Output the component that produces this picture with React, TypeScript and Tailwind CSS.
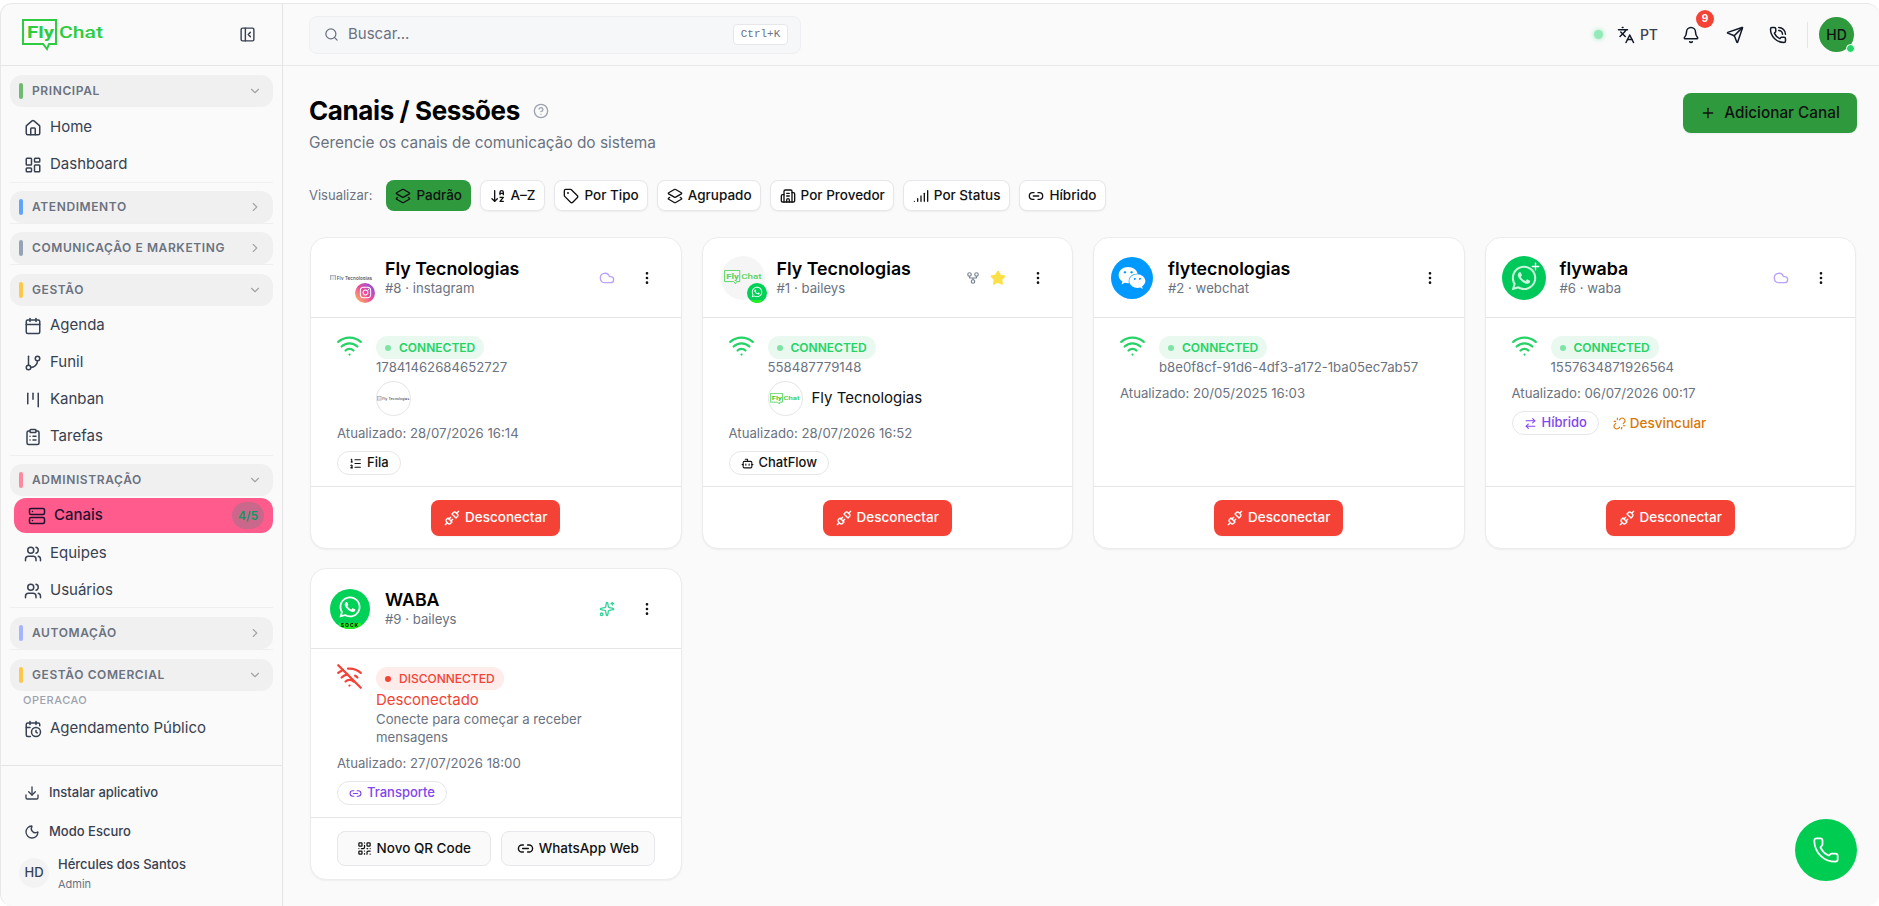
import type { ReactNode } from "react";
import {
  ArrowDownAZ,
  ArrowRightLeft,
  Bell,
  Bot,
  Building2,
  Calendar,
  CalendarClock,
  ChevronDown,
  ChevronRight,
  CircleHelp,
  ClipboardList,
  Cloud,
  Download,
  EllipsisVertical,
  GitBranch,
  GitFork,
  House,
  Kanban,
  Languages,
  Layers2,
  LayoutDashboard,
  Link2,
  ListOrdered,
  Moon,
  PanelLeftClose,
  Phone,
  PhoneCall,
  Plus,
  QrCode,
  Search,
  Send,
  Server,
  Signal,
  Sparkles,
  Star,
  Tag,
  Unlink,
  Unplug,
  Users,
  Wifi,
  WifiOff,
} from "lucide-react";
import { FaInstagram, FaWeixin, FaWhatsapp } from "react-icons/fa";

function Logo({ className }: { className: string }) {
  return (
    <svg viewBox="0 0 82 32" className={className} fill="none">
      <path d="M1 1h33v24H27l-2 5-4-5H1z" stroke="#2ecc40" strokeWidth="2" />
      <text x="5" y="19" fontFamily="Roboto, sans-serif" fontWeight="700" fontSize="16" fill="#2ecc40" textLength="27" lengthAdjust="spacingAndGlyphs">
        Fly
      </text>
      <text x="37" y="19" fontFamily="Roboto, sans-serif" fontWeight="500" fontSize="16" fill="#2ecc40" textLength="44" lengthAdjust="spacingAndGlyphs">
        Chat
      </text>
    </svg>
  );
}

function BrokenLogo({ className }: { className: string }) {
  return (
    <svg viewBox="0 0 44 6" className={className}>
      <rect x="0.5" y="0.5" width="5" height="5" fill="#e5e7eb" stroke="#9ca3af" strokeWidth="0.8" />
      <text x="7" y="4.8" fontFamily="Inter, sans-serif" fontSize="4.6" fontWeight="500" fill="#374151" textLength="36">
        Fly Tecnologias
      </text>
    </svg>
  );
}

function SideItem({ icon, label }: { icon: ReactNode; label: string }) {
  return (
    <div className="flex h-[37px] items-center gap-[8px] pl-[14px] text-[15px] text-[#374151]">
      {icon}
      <span>{label}</span>
    </div>
  );
}

function SideGroup({
  color,
  label,
  open,
  last,
  top,
  children,
}: {
  color: string;
  label: string;
  open?: boolean;
  last?: boolean;
  top: string;
  children?: ReactNode;
}) {
  return (
    <div className={last ? top : `border-b border-[#efefef] ${top}`}>
      <div className="flex h-[32px] items-center rounded-xl bg-[#f0f0f0] pl-[9px] pr-[11px]">
        <span className={`h-[16px] w-[4px] rounded-full ${color}`} />
        <span className="ml-[9px] flex-1 text-[12px] font-semibold tracking-[0.6px] text-[#6b7280]">{label}</span>
        {open ? (
          <ChevronDown className="size-[14px] text-[#a3a3a3]" />
        ) : (
          <ChevronRight className="size-[14px] text-[#a3a3a3]" />
        )}
      </div>
      {children}
    </div>
  );
}

function Sidebar() {
  const ic = "size-[18px] shrink-0 text-[#374151]";
  return (
    <aside className="flex w-[282px] shrink-0 flex-col border-r border-[#e5e5e5]">
      <div className="flex h-[62px] shrink-0 items-center justify-between border-b border-[#e5e5e5] pl-[21px] pr-[26px]">
        <Logo className="h-[32px] w-[82px]" />
        <PanelLeftClose className="size-[17px] text-[#374151]" />
      </div>
      <nav className="flex-1 px-[9px]">
        <SideGroup top="pt-[9px]" color="bg-[#6fba72]" label="PRINCIPAL" open>
          <div className="-mb-[1px] pt-[2px]">
            <SideItem icon={<House className={ic} />} label="Home" />
            <SideItem icon={<LayoutDashboard className={ic} />} label="Dashboard" />
          </div>
        </SideGroup>
        <SideGroup top="pt-[8px]" color="bg-[#60a5fa]" label="ATENDIMENTO" />
        <SideGroup top="pt-[8px]" color="bg-[#94a3b8]" label="COMUNICAÇÃO E MARKETING" />
        <SideGroup top="pt-[9px]" color="bg-[#fcc84a]" label="GESTÃO" open>
          <div className="pt-[1px]">
            <SideItem icon={<Calendar className={ic} />} label="Agenda" />
            <SideItem icon={<GitBranch className={ic} />} label="Funil" />
            <SideItem icon={<Kanban className={ic} />} label="Kanban" />
            <SideItem icon={<ClipboardList className={ic} />} label="Tarefas" />
          </div>
        </SideGroup>
        <SideGroup top="pt-[8px]" color="bg-[#fb8a9c]" label="ADMINISTRAÇÃO" open>
          <div className="ml-[4px] mt-[2px] flex h-[35px] items-center rounded-xl bg-[#ff5c8d] pl-[14px] pr-[9px]">
            <Server className="size-[18px] text-[#1f1130]" />
            <span className="ml-[8px] flex-1 text-[15px] font-medium text-[#1f1130]">Canais</span>
            <span className="flex h-[27px] w-[32px] items-center justify-center rounded-full bg-[#c9688a] text-[12px] font-semibold text-[#0d9b63]">
              4/5
            </span>
          </div>
          <div className="-mb-[2px] pt-[2px]">
            <SideItem icon={<Users className={ic} />} label="Equipes" />
            <SideItem icon={<Users className={ic} />} label="Usuários" />
          </div>
        </SideGroup>
        <SideGroup top="pt-[9px]" color="bg-[#a5b4fc]" label="AUTOMAÇÃO" />
        <SideGroup top="pt-[9px]" color="bg-[#fcc84a]" label="GESTÃO COMERCIAL" open last>
          <div className="pl-[13px] pt-[2px] text-[11px] font-medium leading-[14px] tracking-[0.5px] text-[#9ca3af]">OPERACAO</div>
          <div className="pt-[3px]">
            <SideItem icon={<CalendarClock className={ic} />} label="Agendamento Público" />
          </div>
        </SideGroup>
      </nav>
      <div className="shrink-0 border-t border-[#e5e5e5] pb-[11px] pt-[8px] text-[13px] font-medium text-[#374151]">
        <div className="flex h-[38px] items-center gap-[9px] pl-[23px]">
          <Download className="size-[16px]" />
          Instalar aplicativo
        </div>
        <div className="flex h-[39px] items-center gap-[9px] pl-[23px]">
          <Moon className="size-[16px]" />
          Modo Escuro
        </div>
        <div className="flex h-[44px] items-center gap-[9px] pl-[18px]">
          <span className="flex size-[30px] items-center justify-center rounded-full bg-[#f3f3f3] text-[13px]">HD</span>
          <div>
            <div className="leading-[18px]">Hércules dos Santos</div>
            <div className="mt-[4px] text-[11px] font-normal leading-[14px] text-[#6b7280]">Admin</div>
          </div>
        </div>
      </div>
    </aside>
  );
}

function TopBar() {
  return (
    <header className="flex h-[62px] shrink-0 items-center justify-between border-b border-[#e9e9e9] pl-[26px] pr-[25px]">
      <div className="flex h-[38px] w-[492px] items-center rounded-lg border border-[#eeeff2] bg-[#f6f7f9] pl-[14px] pr-[12px]">
        <Search className="size-[15px] text-[#6b7280]" />
        <span className="ml-[9px] flex-1 text-[15px] text-[#6b7280]">Buscar...</span>
        <span className="flex h-[21px] w-[55px] items-center justify-center rounded border border-[#e5e7eb] bg-white font-['Liberation_Mono',monospace] text-[11px] text-[#6b7280]">
          Ctrl+K
        </span>
      </div>
      <div className="flex items-center text-[#111827]">
        <span className="size-[9px] rounded-full bg-[#93eab8] shadow-[0_0_5px_#93eab8]" />
        <Languages className="ml-[14px] size-[18px]" />
        <span className="ml-[5px] text-[14px] font-medium text-[#374151]">PT</span>
        <span className="relative ml-[24px] flex">
          <Bell className="size-[18px]" />
          <span className="absolute left-[14px] -top-[16px] flex size-[18px] items-center justify-center rounded-full bg-[#f44336] text-[10px] font-bold text-white">
            9
          </span>
        </span>
        <Send className="ml-[26px] size-[18px]" />
        <PhoneCall className="ml-[25px] size-[18px]" />
        <span className="ml-[20px] h-[26px] w-px bg-[#e5e5e5]" />
        <span className="relative ml-[11px] flex size-[35px] items-center justify-center rounded-full bg-[#2e993d] text-[14px] font-medium text-[#111]">
          HD
          <span className="absolute -bottom-[1px] -right-[1px] size-[9px] rounded-full border border-white bg-[#25d366]" />
        </span>
      </div>
    </header>
  );
}

function FilterButton({ icon, label, active }: { icon: ReactNode; label: string; active?: boolean }) {
  return (
    <div
      className={
        active
          ? "flex h-[31px] items-center gap-[5px] rounded-lg bg-[#2e993d] px-[9px] text-[13.5px] font-medium text-[#111]"
          : "flex h-[31px] items-center gap-[5px] rounded-lg border border-[#e5e7eb] bg-white px-[8.5px] text-[13.5px] font-medium text-[#111] shadow-xs"
      }
    >
      {icon}
      {label}
    </div>
  );
}

function StatusBadge({ off }: { off?: boolean }) {
  return off ? (
    <span className="flex h-[23px] w-fit items-center gap-[8px] rounded-full bg-[#fdecea] px-[9px] text-[12px] font-medium text-[#f44336]">
      <span className="size-[6px] rounded-full bg-[#f44336]" />
      DISCONNECTED
    </span>
  ) : (
    <span className="flex h-[23px] w-fit items-center gap-[8px] rounded-full bg-[#e9f9ef] px-[9px] text-[12px] font-semibold text-[#25d366]">
      <span className="size-[6px] rounded-full bg-[#7fe3a4]" />
      CONNECTED
    </span>
  );
}

function Chip({ icon, label, purple }: { icon: ReactNode; label: string; purple?: boolean }) {
  return (
    <span
      className={
        purple
          ? "flex h-[24px] w-fit items-center gap-[5px] rounded-full border border-[#e5e7eb] px-[11px] text-[13px] font-medium text-[#8244f0]"
          : "flex h-[24px] w-fit items-center gap-[5px] rounded-full border border-[#e5e7eb] px-[11px] text-[13px] font-medium text-[#111]"
      }
    >
      {icon}
      {label}
    </span>
  );
}

function DisconnectFooter() {
  return (
    <button className="flex h-[36px] w-[129px] items-center justify-center gap-[5px] rounded-lg bg-[#f44336] text-[13.5px] font-medium text-white shadow-xs">
      <Unplug className="size-[16px]" />
      Desconectar
    </button>
  );
}

function ChannelCard({
  avatar,
  name,
  sub,
  actions,
  off,
  line,
  children,
  footer,
}: {
  avatar: ReactNode;
  name: string;
  sub: string;
  actions?: ReactNode;
  off?: boolean;
  line: ReactNode;
  children: ReactNode;
  footer?: ReactNode;
}) {
  return (
    <div className="flex h-[312px] flex-col rounded-2xl border border-[#ececec] bg-white shadow-xs">
      <div className="flex h-[80px] shrink-0 items-center border-b border-[#e5e5e5] pl-[18px] pr-[26px]">
        <div className="relative flex size-[44px] shrink-0 items-center justify-center">{avatar}</div>
        <div className="ml-[12px] flex-1 pb-[3px]">
          <div className="text-[17.8px] font-semibold leading-[23px] text-black">{name}</div>
          <div className="text-[13.2px] leading-[16px] text-[#6b7280]">{sub}</div>
        </div>
        <div className="flex items-center gap-[10px]">{actions}</div>
        <EllipsisVertical className="ml-[24px] size-[16px] text-[#111]" />
      </div>
      <div className="flex-1 px-[26px] pt-[18px]">
        <div className="flex">
          {off ? (
            <WifiOff className="-ml-[1px] -mt-[4px] size-[27px] shrink-0 text-[#f44336]" />
          ) : (
            <Wifi className="-ml-[1px] -mt-[4px] size-[27px] shrink-0 text-[#25d366]" />
          )}
          <div className="ml-[13px] flex-1">
            <StatusBadge off={off} />
            {line}
          </div>
        </div>
        {children}
      </div>
      <div className="flex h-[62px] shrink-0 items-center justify-center gap-[10px] border-t border-[#e5e5e5]">
        {footer ?? <DisconnectFooter />}
      </div>
    </div>
  );
}

const numberLine = "text-[13.2px] leading-[16px] text-[#6b7280]";
const updated = "mt-[9px] text-[13.2px] leading-[16px] text-[#6b7280]";
const updatedShort = "mt-[10px] text-[13.2px] leading-[16px] text-[#6b7280]";

function SockBadge({ className, label }: { className: string; label?: string }) {
  return (
    <span className={`absolute flex items-center justify-center overflow-hidden rounded-full bg-[#00d157] text-white ${className}`}>
      <FaWhatsapp className="mb-[6%] size-[60%]" />
      <span className="absolute bottom-0 left-[23%] flex h-[15%] w-[54%] items-center justify-center bg-[#22ee22] text-[5px] font-bold leading-none tracking-[1px] text-black">
        {label}
      </span>
    </span>
  );
}

export default function App() {
  const small = "size-[13px]";
  const filter = "size-[16px]";
  const cloud = "size-[16px] text-[#b9a2f8]";
  return (
    <div className="h-screen overflow-hidden bg-white pt-[3px] font-['Inter',sans-serif]">
      <div className="flex h-[903px] overflow-hidden rounded-xl border-t border-l border-[#e8e8e8] bg-[#fafafa]">
        <Sidebar />
        <div className="flex min-w-0 flex-1 flex-col">
          <TopBar />
          <main className="relative flex-1 pl-[26px] pr-[22px] pt-[27px]">
            <div className="flex items-start justify-between">
              <div>
                <div className="flex items-center gap-[13px]">
                  <h1 className="text-[26px] font-bold leading-[36px] tracking-[-0.4px] text-black">Canais / Sessões</h1>
                  <CircleHelp className="size-[16px] text-[#9ca3af]" />
                </div>
                <p className="mt-[5px] text-[15.4px] leading-[18px] text-[#6b7280]">Gerencie os canais de comunicação do sistema</p>
              </div>
              <button className="flex h-[40px] w-[174px] items-center justify-center gap-[8px] rounded-lg bg-[#2e993d] text-[15.3px] font-medium text-[#111] shadow-xs">
                <Plus className="size-[16px]" />
                Adicionar Canal
              </button>
            </div>
            <div className="mt-[28px] flex items-center gap-[9px]">
              <span className="mr-[5px] text-[13px] text-[#6b7280]">Visualizar:</span>
              <FilterButton active icon={<Layers2 className={filter} />} label="Padrão" />
              <FilterButton icon={<ArrowDownAZ className={filter} />} label="A–Z" />
              <FilterButton icon={<Tag className={filter} />} label="Por Tipo" />
              <FilterButton icon={<Layers2 className={filter} />} label="Agrupado" />
              <FilterButton icon={<Building2 className={filter} />} label="Por Provedor" />
              <FilterButton icon={<Signal className={filter} />} label="Por Status" />
              <FilterButton icon={<Link2 className={filter} />} label="Híbrido" />
            </div>
            <div className="mx-[1px] mt-[26px] grid grid-cols-4 gap-x-[20px] gap-y-[19px]">
              <ChannelCard
                avatar={
                  <>
                    <BrokenLogo className="w-[43px]" />
                    <span className="absolute -bottom-[3px] -right-[2px] flex size-[20px] items-center justify-center rounded-full bg-linear-to-tr from-[#fbbf24] via-[#ec4899] to-[#7c3aed] text-white">
                      <FaInstagram className="size-[13px]" />
                    </span>
                  </>
                }
                name="Fly Tecnologias"
                sub="#8 · instagram"
                actions={<Cloud className={cloud} />}
                line={
                  <>
                    <div className={numberLine}>17841462684652727</div>
                    <span className="mt-[6px] flex size-[35px] items-center justify-center rounded-full border border-[#e5e5e5]">
                      <BrokenLogo className="w-[33px]" />
                    </span>
                  </>
                }
              >
                <div className={updated}>Atualizado: 28/07/2026 16:14</div>
                <div className="mt-[10px]">
                  <Chip icon={<ListOrdered className={small} />} label="Fila" />
                </div>
              </ChannelCard>
              <ChannelCard
                avatar={
                  <>
                    <span className="flex size-[44px] items-center justify-center rounded-full bg-[#f5f5f5]">
                      <Logo className="w-[38px] opacity-80" />
                    </span>
                    <SockBadge className="-bottom-[3px] -right-[2px] size-[20px]" />
                  </>
                }
                name="Fly Tecnologias"
                sub="#1 · baileys"
                actions={
                  <>
                    <GitFork className="size-[14px] text-[#7b8494]" />
                    <Star className="size-[16px] fill-[#fde047] text-[#fde047]" />
                  </>
                }
                line={
                  <>
                    <div className={numberLine}>558487779148</div>
                    <div className="mt-[6px] flex items-center gap-[9px]">
                      <span className="flex size-[35px] items-center justify-center rounded-full border border-[#e5e5e5]">
                        <Logo className="w-[30px]" />
                      </span>
                      <span className="text-[15px] text-[#111]">Fly Tecnologias</span>
                    </div>
                  </>
                }
              >
                <div className={updated}>Atualizado: 28/07/2026 16:52</div>
                <div className="mt-[10px]">
                  <Chip icon={<Bot className={small} />} label="ChatFlow" />
                </div>
              </ChannelCard>
              <ChannelCard
                avatar={
                  <span className="-ml-[4px] flex size-[42px] items-center justify-center rounded-full bg-[#0099ff] text-white">
                    <FaWeixin className="size-[28px]" />
                  </span>
                }
                name="flytecnologias"
                sub="#2 · webchat"
                line={<div className={numberLine}>b8e0f8cf-91d6-4df3-a172-1ba05ec7ab57</div>}
              >
                <div className={updatedShort}>Atualizado: 20/05/2025 16:03</div>
              </ChannelCard>
              <ChannelCard
                avatar={
                  <span className="relative -ml-[4px] flex size-[44px] shrink-0 items-center justify-center rounded-full bg-[#00c95c] text-[#c9f5da]">
                    <FaWhatsapp className="size-[28px]" />
                    <Plus className="absolute right-[5px] top-[5px] size-[11px] stroke-3 text-white" />
                  </span>
                }
                name="flywaba"
                sub="#6 · waba"
                actions={<Cloud className={cloud} />}
                line={<div className={numberLine}>1557634871926564</div>}
              >
                <div className={updatedShort}>Atualizado: 06/07/2026 00:17</div>
                <div className="mt-[10px] flex items-center gap-[14px]">
                  <Chip purple icon={<ArrowRightLeft className={small} />} label="Híbrido" />
                  <span className="flex items-center gap-[4px] text-[13.5px] font-medium text-[#d97706]">
                    <Unlink className={small} />
                    Desvincular
                  </span>
                </div>
              </ChannelCard>
              <ChannelCard
                avatar={<SockBadge label="SOCK" className="top-[2px] left-[1px] size-[40px]" />}
                name="WABA"
                sub="#9 · baileys"
                actions={<Sparkles className="size-[16px] text-[#34d399]" />}
                off
                line={
                  <>
                    <div className="text-[15px] leading-[20px] text-[#f44336]">Desconectado</div>
                    <div className="max-w-[240px] text-[13.2px] leading-[18px] text-[#6b7280]">Conecte para começar a receber mensagens</div>
                  </>
                }
                footer={
                  <>
                    <button className="flex h-[35px] w-[154px] items-center justify-center gap-[5px] rounded-lg border border-[#e5e7eb] bg-[#fafafa] text-[13.5px] font-medium text-[#111]">
                      <QrCode className="size-[15px]" />
                      Novo QR Code
                    </button>
                    <button className="flex h-[35px] w-[154px] items-center justify-center gap-[5px] rounded-lg border border-[#e5e7eb] bg-[#fafafa] text-[13.5px] font-medium text-[#111]">
                      <Link2 className="size-[17px]" />
                      WhatsApp Web
                    </button>
                  </>
                }
              >
                <div className={updated}>Atualizado: 27/07/2026 18:00</div>
                <div className="mt-[10px]">
                  <Chip purple icon={<Link2 className={small} />} label="Transporte" />
                </div>
              </ChannelCard>
            </div>
            <div className="absolute bottom-[25px] right-[22px] flex size-[62px] items-center justify-center rounded-full bg-[#00cc52] text-white">
              <Phone className="size-[28px]" strokeWidth={1.5} />
            </div>
          </main>
        </div>
      </div>
    </div>
  );
}
